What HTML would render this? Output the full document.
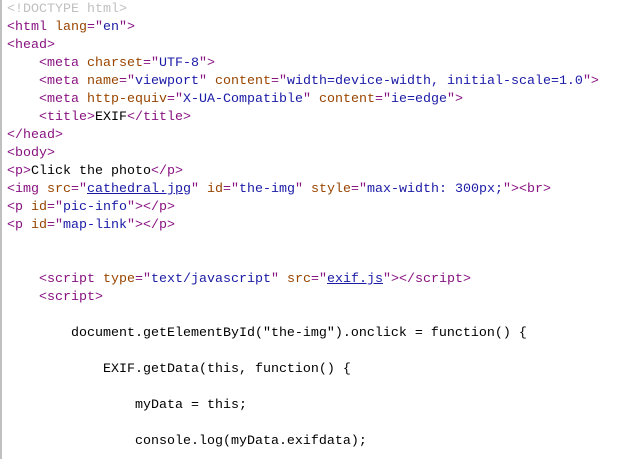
<!DOCTYPE html>
<html><head><meta charset="utf-8"><style>
html,body{margin:0;padding:0;background:#fff;width:623px;height:459px;overflow:hidden}
body{border-left:2px solid #c0c0c0;box-sizing:border-box}
pre{margin:0;padding:1px 0 0 5px;font-family:"Liberation Mono",monospace;font-size:13.33px;line-height:18px;color:#000;white-space:pre}
.t{color:#881280}.a{color:#994500}.v{color:#1a1aa6}.c{color:#c0c0c0}
a{color:#1a1aa6;text-decoration:underline}
</style></head><body><pre><span class="c">&lt;!DOCTYPE html&gt;</span>
<span class="t">&lt;html <span class="a">lang</span>="<span class="v">en</span>"&gt;</span>
<span class="t">&lt;head&gt;</span>
    <span class="t">&lt;meta <span class="a">charset</span>="<span class="v">UTF-8</span>"&gt;</span>
    <span class="t">&lt;meta <span class="a">name</span>="<span class="v">viewport</span>" <span class="a">content</span>="<span class="v">width=device-width, initial-scale=1.0</span>"&gt;</span>
    <span class="t">&lt;meta <span class="a">http-equiv</span>="<span class="v">X-UA-Compatible</span>" <span class="a">content</span>="<span class="v">ie=edge</span>"&gt;</span>
    <span class="t">&lt;title&gt;</span>EXIF<span class="t">&lt;/title&gt;</span>
<span class="t">&lt;/head&gt;</span>
<span class="t">&lt;body&gt;</span>
<span class="t">&lt;p&gt;</span>Click the photo<span class="t">&lt;/p&gt;</span>
<span class="t">&lt;img <span class="a">src</span>="<a>cathedral.jpg</a>" <span class="a">id</span>="<span class="v">the-img</span>" <span class="a">style</span>="<span class="v">max-width: 300px;</span>"&gt;&lt;br&gt;</span>
<span class="t">&lt;p <span class="a">id</span>="<span class="v">pic-info</span>"&gt;&lt;/p&gt;</span>
<span class="t">&lt;p <span class="a">id</span>="<span class="v">map-link</span>"&gt;&lt;/p&gt;</span>


    <span class="t">&lt;script <span class="a">type</span>="<span class="v">text/javascript</span>" <span class="a">src</span>="<a>exif.js</a>"&gt;&lt;/script&gt;</span>
    <span class="t">&lt;script&gt;</span>

        document.getElementById("the-img").onclick = function() {

            EXIF.getData(this, function() {

                myData = this;

                console.log(myData.exifdata);
</pre></body></html>
